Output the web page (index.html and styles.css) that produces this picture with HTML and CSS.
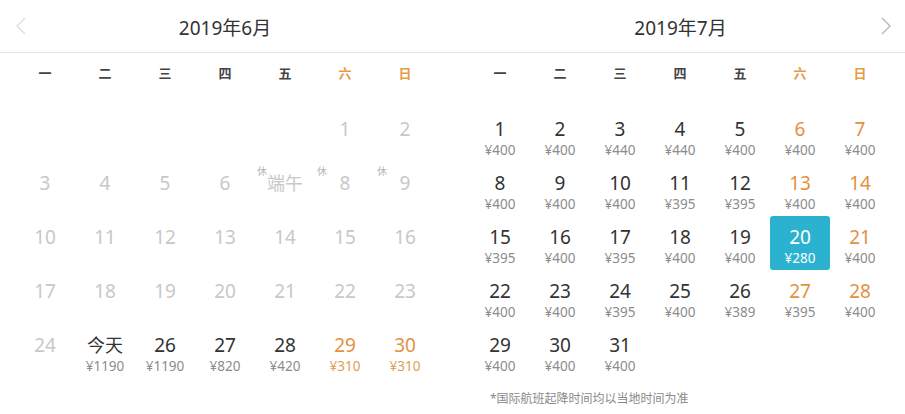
FILE: index.html
```html
<!DOCTYPE html>
<html lang="zh-CN">
<head>
<meta charset="utf-8">
<title>日历</title>
<link rel="stylesheet" href="styles.css">
</head>
<body>
<div class="cal">
  <section class="month left">
    <div class="head">
      <span class="nav prev"><svg width="12" height="18" viewBox="0 0 12 18"><path d="M10 1 L2 9 L10 17" fill="none" stroke="currentColor" stroke-width="1.4"/></svg></span>
      <h2 class="title">2019年6月</h2>
      <span class="nav"></span>
    </div>
    <div class="week">
      <span>一</span><span>二</span><span>三</span><span>四</span><span>五</span><span class="we">六</span><span class="we">日</span>
    </div>
    <div class="grid">
      <div class="cell"></div><div class="cell"></div><div class="cell"></div><div class="cell"></div><div class="cell"></div>
      <div class="cell past"><b>1</b></div>
      <div class="cell past"><b>2</b></div>

      <div class="cell past"><b>3</b></div>
      <div class="cell past"><b>4</b></div>
      <div class="cell past"><b>5</b></div>
      <div class="cell past"><b>6</b></div>
      <div class="cell past"><i class="rest">休</i><b class="fest">端午</b></div>
      <div class="cell past"><i class="rest">休</i><b>8</b></div>
      <div class="cell past"><i class="rest">休</i><b>9</b></div>

      <div class="cell past"><b>10</b></div>
      <div class="cell past"><b>11</b></div>
      <div class="cell past"><b>12</b></div>
      <div class="cell past"><b>13</b></div>
      <div class="cell past"><b>14</b></div>
      <div class="cell past"><b>15</b></div>
      <div class="cell past"><b>16</b></div>

      <div class="cell past"><b>17</b></div>
      <div class="cell past"><b>18</b></div>
      <div class="cell past"><b>19</b></div>
      <div class="cell past"><b>20</b></div>
      <div class="cell past"><b>21</b></div>
      <div class="cell past"><b>22</b></div>
      <div class="cell past"><b>23</b></div>

      <div class="cell past"><b>24</b></div>
      <div class="cell"><b class="fest">今天</b><small>¥1190</small></div>
      <div class="cell"><b>26</b><small>¥1190</small></div>
      <div class="cell"><b>27</b><small>¥820</small></div>
      <div class="cell"><b>28</b><small>¥420</small></div>
      <div class="cell wk low"><b>29</b><small>¥310</small></div>
      <div class="cell wk low"><b>30</b><small>¥310</small></div>
    </div>
  </section>

  <section class="month right">
    <div class="head">
      <span class="nav"></span>
      <h2 class="title">2019年7月</h2>
      <span class="nav next"><svg width="12" height="18" viewBox="0 0 12 18"><path d="M2 1 L10 9 L2 17" fill="none" stroke="currentColor" stroke-width="1.4"/></svg></span>
    </div>
    <div class="week">
      <span>一</span><span>二</span><span>三</span><span>四</span><span>五</span><span class="we">六</span><span class="we">日</span>
    </div>
    <div class="grid">
      <div class="cell"><b>1</b><small>¥400</small></div>
      <div class="cell"><b>2</b><small>¥400</small></div>
      <div class="cell"><b>3</b><small>¥440</small></div>
      <div class="cell"><b>4</b><small>¥440</small></div>
      <div class="cell"><b>5</b><small>¥400</small></div>
      <div class="cell wk"><b>6</b><small>¥400</small></div>
      <div class="cell wk"><b>7</b><small>¥400</small></div>

      <div class="cell"><b>8</b><small>¥400</small></div>
      <div class="cell"><b>9</b><small>¥400</small></div>
      <div class="cell"><b>10</b><small>¥400</small></div>
      <div class="cell"><b>11</b><small>¥395</small></div>
      <div class="cell"><b>12</b><small>¥395</small></div>
      <div class="cell wk"><b>13</b><small>¥400</small></div>
      <div class="cell wk"><b>14</b><small>¥400</small></div>

      <div class="cell"><b>15</b><small>¥395</small></div>
      <div class="cell"><b>16</b><small>¥400</small></div>
      <div class="cell"><b>17</b><small>¥395</small></div>
      <div class="cell"><b>18</b><small>¥400</small></div>
      <div class="cell"><b>19</b><small>¥400</small></div>
      <div class="cell sel"><b>20</b><small>¥280</small></div>
      <div class="cell wk"><b>21</b><small>¥400</small></div>

      <div class="cell"><b>22</b><small>¥400</small></div>
      <div class="cell"><b>23</b><small>¥400</small></div>
      <div class="cell"><b>24</b><small>¥395</small></div>
      <div class="cell"><b>25</b><small>¥400</small></div>
      <div class="cell"><b>26</b><small>¥389</small></div>
      <div class="cell wk"><b>27</b><small>¥395</small></div>
      <div class="cell wk"><b>28</b><small>¥400</small></div>

      <div class="cell"><b>29</b><small>¥400</small></div>
      <div class="cell"><b>30</b><small>¥400</small></div>
      <div class="cell"><b>31</b><small>¥400</small></div>
    </div>
    <p class="note">*国际航班起降时间均以当地时间为准</p>
  </section>
</div>
</body>
</html>
```

FILE: styles.css
```css
* { box-sizing: border-box; }
html, body { margin: 0; padding: 0; background: #fff; }
body {
  font-family: "Noto Sans", "Noto Sans CJK SC", sans-serif;
  color: #333;
  width: 905px;
  height: 414px;
  overflow: hidden;
}
.cal { display: flex; }
.month { min-width: 0; }
.month.left { width: 455px; }
.month.right { width: 450px; }

.head {
  height: 53px;
  display: grid;
  grid-template-columns: 1fr auto 1fr;
  align-items: center;
  border-bottom: 1px solid #e3e3e3;
  padding: 0 14px;
}
.left .head { padding-right: 19px; }
.right .head { padding: 0 13px 0 14px; }
.title {
  margin: 0;
  font-size: 19px;
  font-weight: 400;
  color: #333;
  padding-top: 1px;
}
.nav { display: flex; }
.nav svg { display: block; }
.prev { justify-self: start; color: #dedede; padding-left: 1px; }
.next { justify-self: end; color: #b8b8b8; }

.week {
  display: grid;
  grid-template-columns: repeat(7, 60px);
  justify-content: center;
  height: 38px;
  align-items: center;
  font-size: 13px;
  font-weight: 700;
  color: #444;
  text-align: center;
}
.left .week, .left .grid { padding-right: 5px; }
.week .we { color: #e59a43; }

.grid {
  margin-top: 17px;
  display: grid;
  grid-template-columns: repeat(7, 60px);
  grid-auto-rows: 54px;
  justify-content: center;
}
.cell {
  position: relative;
  display: flex;
  flex-direction: column;
  align-items: center;
  padding-top: 9px;
  border-radius: 3px;
}
.cell b {
  font-weight: 400;
  font-size: 19px;
  line-height: 24px;
  color: #333;
}
.cell b.fest { font-size: 18px; }
.cell small {
  font-size: 13.5px;
  line-height: 18px;
  color: #8c8c8c;
}
.cell.past b { color: #c8c8c8; }
.cell.wk b { color: #e3913f; }
.cell.low small { color: #e0a04f; }
.cell.sel { background: #2cb2d1; }
.cell.sel b, .cell.sel small { color: #fff; }

.rest {
  position: absolute;
  left: 2px;
  top: 3px;
  font-style: normal;
  font-size: 10px;
  line-height: 12px;
  color: #b8b8b8;
}

.note {
  margin: 13px 0 0 35px;
  font-size: 12px;
  line-height: 16px;
  color: #8a8a8a;
}
```
